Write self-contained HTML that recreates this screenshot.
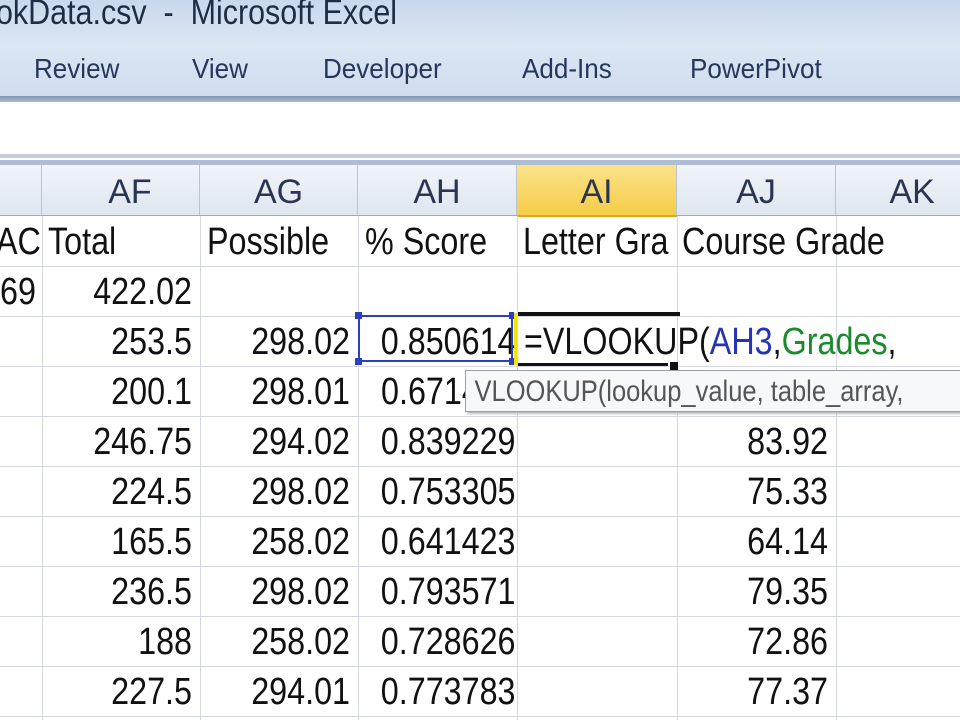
<!DOCTYPE html>
<html><head><meta charset="utf-8"><style>
body{margin:0;width:960px;height:720px;overflow:hidden;background:#fff;position:relative;font-family:"Liberation Sans",sans-serif;}
.a{position:absolute;white-space:nowrap;}
.t{font-size:38px;line-height:50px;color:#111;transform:scaleX(0.85);transform-origin:left center;}
.r{text-align:right;transform-origin:right center;}
.v{position:absolute;width:1px;background:#d4d8de;}
.h{position:absolute;height:1px;left:0;width:960px;background:#d4d8de;}
.ch{position:absolute;top:165px;height:50px;background:linear-gradient(#f1f4f9,#dfe6ef);border-right:1px solid #b8c4d4;font-size:34px;line-height:54px;text-align:center;color:#2a3550;}
.tab{position:absolute;top:53px;font-size:28px;color:#25375a;transform:scaleX(0.93);transform-origin:left center;white-space:nowrap;}
</style></head><body>
<div class="a" style="left:0;top:0;width:960px;height:100px;background:linear-gradient(#c9d8ec,#dbe6f3 45%,#cfdcee)"></div>
<div class="a" style="left:-4px;top:-7px;font-size:35px;color:#1e2c44;transform:scaleX(0.87);transform-origin:left center;">okData.csv &nbsp;-&nbsp; Microsoft Excel</div>
<div class="tab" style="left:34px">Review</div>
<div class="tab" style="left:192px">View</div>
<div class="tab" style="left:323px">Developer</div>
<div class="tab" style="left:522px">Add-Ins</div>
<div class="tab" style="left:690px">PowerPivot</div>
<div class="a" style="left:0;top:96px;width:960px;height:6px;background:linear-gradient(#7f95b3,#a9bbd2)"></div>
<div class="a" style="left:0;top:154px;width:960px;height:4px;background:#c4cfdd"></div>
<div class="a" style="left:0;top:160px;width:960px;height:5px;background:#aebdd1"></div>
<div class="ch" style="left:0;width:41px"></div>
<div class="ch" style="left:42px;width:157px">&nbsp;&nbsp;AF</div>
<div class="ch" style="left:200px;width:157px">AG</div>
<div class="ch" style="left:358px;width:158px">AH</div>
<div class="ch" style="left:517px;width:159px;background:linear-gradient(#fbe38a,#f6cc47);border-bottom:2px solid #e0a520">AI</div>
<div class="ch" style="left:677px;width:158px">AJ</div>
<div class="ch" style="left:836px;width:124px">&nbsp;&nbsp;&nbsp;AK</div>
<div class="a" style="left:0;top:215px;width:960px;height:1px;background:#9aabc2"></div>
<div class="v" style="left:42px;top:216px;height:504px"></div>
<div class="v" style="left:200px;top:216px;height:504px"></div>
<div class="v" style="left:358px;top:216px;height:504px"></div>
<div class="v" style="left:517px;top:216px;height:504px"></div>
<div class="v" style="left:677px;top:216px;height:504px"></div>
<div class="v" style="left:836px;top:216px;height:504px"></div>
<div class="h" style="top:266px"></div><div class="h" style="top:316px"></div><div class="h" style="top:366px"></div><div class="h" style="top:416px"></div><div class="h" style="top:466px"></div><div class="h" style="top:516px"></div><div class="h" style="top:566px"></div><div class="h" style="top:616px"></div><div class="h" style="top:666px"></div><div class="h" style="top:716px"></div>
<div class="a t" style="left:-4px;top:217px">AC</div>
<div class="a" style="left:43px;top:217px;width:155px;height:48px;background:#fff"></div>
<div class="a t" style="left:48px;top:217px">Total</div>
<div class="a t" style="left:207px;top:217px">Possible</div>
<div class="a t" style="left:365px;top:217px">% Score</div>
<div class="a t" style="left:523px;top:217px">Letter Gra</div>
<div class="a" style="left:678px;top:217px;width:157px;height:48px;background:#fff"></div>
<div class="a t" style="left:682px;top:217px">Course Grade</div>
<div class="a t r" style="left:-70px;width:106px;top:267px">69</div>
<div class="a t r" style="left:42px;width:150px;top:267px">422.02</div>
<div class="a t r" style="left:42px;width:150px;top:317px">253.5</div><div class="a t r" style="left:200px;width:150px;top:317px">298.02</div>
<div class="a t r" style="left:358px;width:152px;top:317px">0.850614</div>
<div class="a" style="left:358px;top:315px;width:155px;height:47px;border:2px solid #2b3fc0;box-sizing:border-box"></div>
<div class="a" style="left:355px;top:312px;width:7px;height:7px;background:#2b3fc0"></div><div class="a" style="left:355px;top:358px;width:7px;height:7px;background:#2b3fc0"></div>
<div class="a" style="left:509px;top:312px;width:5px;height:7px;background:#2b3fc0"></div><div class="a" style="left:509px;top:358px;width:5px;height:7px;background:#2b3fc0"></div>
<div class="a" style="left:514px;top:313px;width:3px;height:52px;background:#f2e600"></div>
<div class="a" style="left:518px;top:312px;width:162px;height:4px;background:#111"></div>
<div class="a" style="left:518px;top:363px;width:150px;height:3px;background:#111"></div>
<div class="a" style="left:670px;top:362px;width:8px;height:8px;background:#111"></div>
<div class="a t" style="left:524px;top:317px">=VLOOKUP(<span style="color:#2533b8">AH3</span>,<span style="color:#1d8a2e">Grades</span>,</div>
<div class="a t r" style="left:42px;width:150px;top:367px">200.1</div><div class="a t r" style="left:200px;width:150px;top:367px">298.01</div><div class="a t" style="left:381px;top:367px">0.6714</div>
<div class="a" style="left:465px;top:370px;width:500px;height:42px;background:#f7f8fa;border:1px solid #9aa0a8;box-shadow:2px 2px 2px #bbb;box-sizing:border-box;overflow:hidden"><div style="font-size:30px;line-height:42px;color:#555;padding-left:10px;white-space:nowrap;transform:scaleX(0.85);transform-origin:left center">VLOOKUP(lookup_value, table_array,</div></div>
<div class="a t r" style="left:42px;width:150px;top:417px">246.75</div><div class="a t r" style="left:200px;width:150px;top:417px">294.02</div><div class="a t r" style="left:358px;width:152px;top:417px">0.839229</div><div class="a t r" style="left:677px;width:151px;top:417px">83.92</div>
<div class="a t r" style="left:42px;width:150px;top:467px">224.5</div><div class="a t r" style="left:200px;width:150px;top:467px">298.02</div><div class="a t r" style="left:358px;width:152px;top:467px">0.753305</div><div class="a t r" style="left:677px;width:151px;top:467px">75.33</div>
<div class="a t r" style="left:42px;width:150px;top:517px">165.5</div><div class="a t r" style="left:200px;width:150px;top:517px">258.02</div><div class="a t r" style="left:358px;width:152px;top:517px">0.641423</div><div class="a t r" style="left:677px;width:151px;top:517px">64.14</div>
<div class="a t r" style="left:42px;width:150px;top:567px">236.5</div><div class="a t r" style="left:200px;width:150px;top:567px">298.02</div><div class="a t r" style="left:358px;width:152px;top:567px">0.793571</div><div class="a t r" style="left:677px;width:151px;top:567px">79.35</div>
<div class="a t r" style="left:42px;width:150px;top:617px">188</div><div class="a t r" style="left:200px;width:150px;top:617px">258.02</div><div class="a t r" style="left:358px;width:152px;top:617px">0.728626</div><div class="a t r" style="left:677px;width:151px;top:617px">72.86</div>
<div class="a t r" style="left:42px;width:150px;top:667px">227.5</div><div class="a t r" style="left:200px;width:150px;top:667px">294.01</div><div class="a t r" style="left:358px;width:152px;top:667px">0.773783</div><div class="a t r" style="left:677px;width:151px;top:667px">77.37</div>
</body></html>
